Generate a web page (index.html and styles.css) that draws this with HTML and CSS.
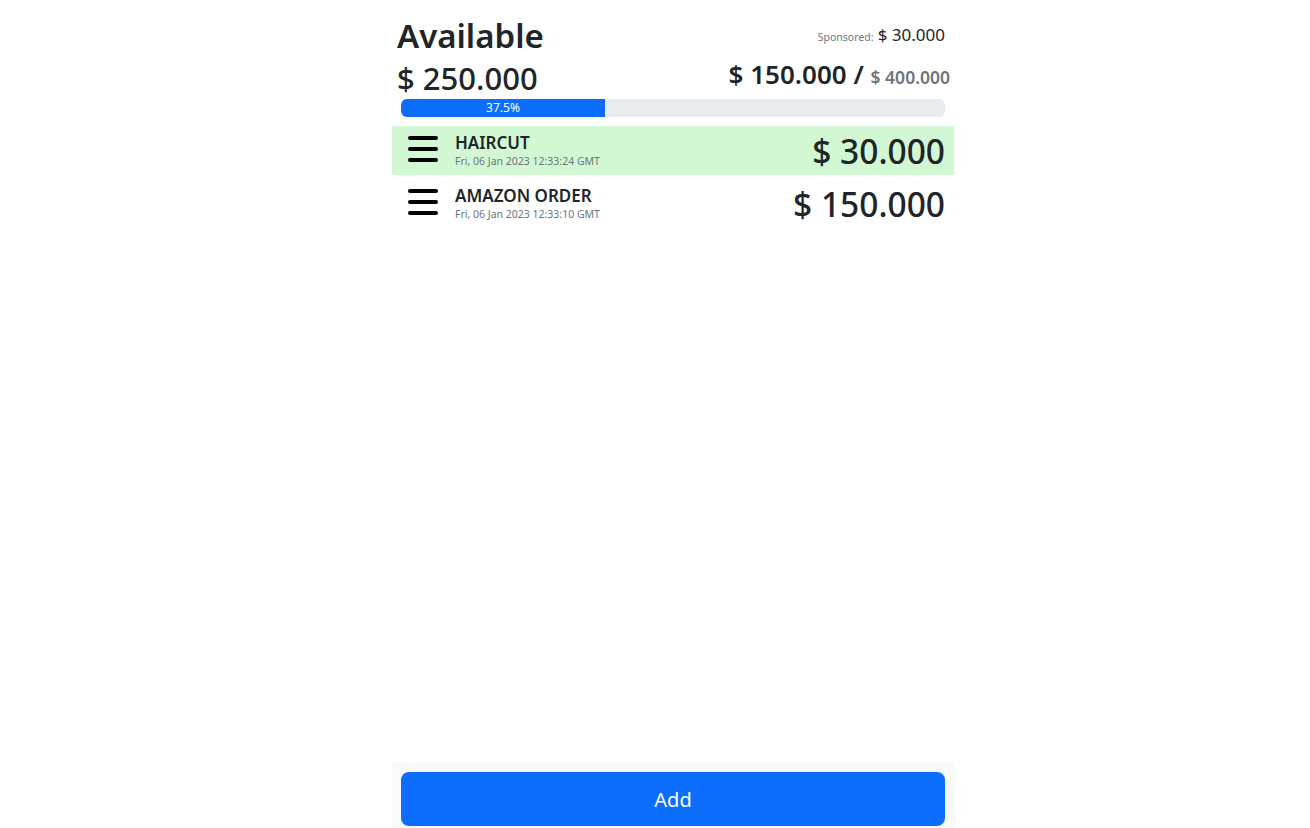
FILE: index.html
```html
<!DOCTYPE html>
<html lang="en">
<head>
<meta charset="utf-8">
<title>Budget</title>
<link rel="stylesheet" href="styles.css">
</head>
<body>
<div class="app">
  <header class="header">
    <div class="head-row row-a">
      <h1 class="title">Available</h1>
      <div class="sponsored"><span class="sp-label">Sponsored:</span> <span class="sp-value">$ 30.000</span></div>
    </div>
    <div class="head-row row-b">
      <div class="available">$ 250.000</div>
      <div class="spent">$ 150.000 / <span class="budget">$ 400.000</span></div>
    </div>
  </header>
  <div class="progress"><div class="progress-bar" style="width:37.5%">37.5%</div></div>
  <ul class="list">
    <li class="item item-sponsored">
      <svg class="handle" width="32" height="28" viewBox="0 0 32 28"><path d="M3 3H29M3 14H29M3 25H29" stroke="#000" stroke-width="4" stroke-linecap="round" fill="none"/></svg>
      <div class="item-text">
        <div class="item-title">HAIRCUT</div>
        <div class="item-date">Fri, 06 Jan 2023 12:33:24 GMT</div>
      </div>
      <div class="item-amount">$ 30.000</div>
    </li>
    <li class="item">
      <svg class="handle" width="32" height="28" viewBox="0 0 32 28"><path d="M3 3H29M3 14H29M3 25H29" stroke="#000" stroke-width="4" stroke-linecap="round" fill="none"/></svg>
      <div class="item-text">
        <div class="item-title">AMAZON ORDER</div>
        <div class="item-date">Fri, 06 Jan 2023 12:33:10 GMT</div>
      </div>
      <div class="item-amount">$ 150.000</div>
    </li>
  </ul>
  <footer class="footer">
    <button class="add-btn" type="button">Add</button>
  </footer>
</div>
</body>
</html>
```
FILE: styles.css
```css
* { box-sizing: border-box; }
html, body { margin: 0; padding: 0; }
body {
  font-family: "Noto Sans", "Open Sans", sans-serif;
  color: #212529;
  background: #fff;
}
.app {
  width: 562px;
  margin-left: 392px;
  height: 828px;
  display: flex;
  flex-direction: column;
}
.header {
  padding: 16px 4px 0 5px;
}
.head-row {
  display: flex;
  justify-content: space-between;
  align-items: flex-start;
}
.row-a { height: 40px; }
.row-b { height: 40px; margin-top: 2px; }
.title {
  margin: 0;
  font-size: 33px;
  line-height: 40px;
  font-weight: 600;
}
.sponsored {
  margin-top: 7px;
  padding-right: 5px;
  line-height: 24px;
}
.sp-label { font-size: 10.5px; color: #6c757d; }
.sp-value { font-size: 17px; }
.available {
  font-size: 31px;
  line-height: 40px;
  font-weight: 500;
}
.spent {
  font-size: 26px;
  line-height: 32px;
  font-weight: 600;
}
.budget {
  font-size: 17.5px;
  color: #6c757d;
}
.progress {
  margin: 1px 9px 0;
  height: 18px;
  border-radius: 6px;
  background: #e9ecef;
  overflow: hidden;
  display: flex;
}
.progress-bar {
  background: #0d6efd;
  color: #fff;
  font-size: 12px;
  line-height: 18px;
  text-align: center;
}
.list {
  list-style: none;
  margin: 9px 0 0;
  padding: 0;
  flex: 1;
  display: flex;
  flex-direction: column;
  gap: 4px;
}
.item {
  height: 49px;
  display: flex;
  align-items: flex-start;
  padding: 0 9px 0 15px;
}
.item-sponsored { background: #d2f8d3; }
.handle { margin-top: 9px; flex: none; }
.item-text {
  margin-left: 16px;
  padding-top: 7px;
  flex: 1;
}
.item-title {
  font-size: 17px;
  line-height: 20px;
  font-weight: 600;
}
.item-date {
  margin-top: 2px;
  font-size: 10.5px;
  line-height: 13px;
  color: #6c757d;
}
.item-amount {
  align-self: center;
  font-size: 33.5px;
  line-height: 40px;
  font-weight: 500;
}
.footer {
  background: #f8f9fa;
  padding: 9px 9px 2px;
}
.add-btn {
  display: block;
  width: 100%;
  height: 54px;
  border: 0;
  border-radius: 8px;
  background: #0d6efd;
  color: #fff;
  font-family: inherit;
  font-size: 20px;
}
```
